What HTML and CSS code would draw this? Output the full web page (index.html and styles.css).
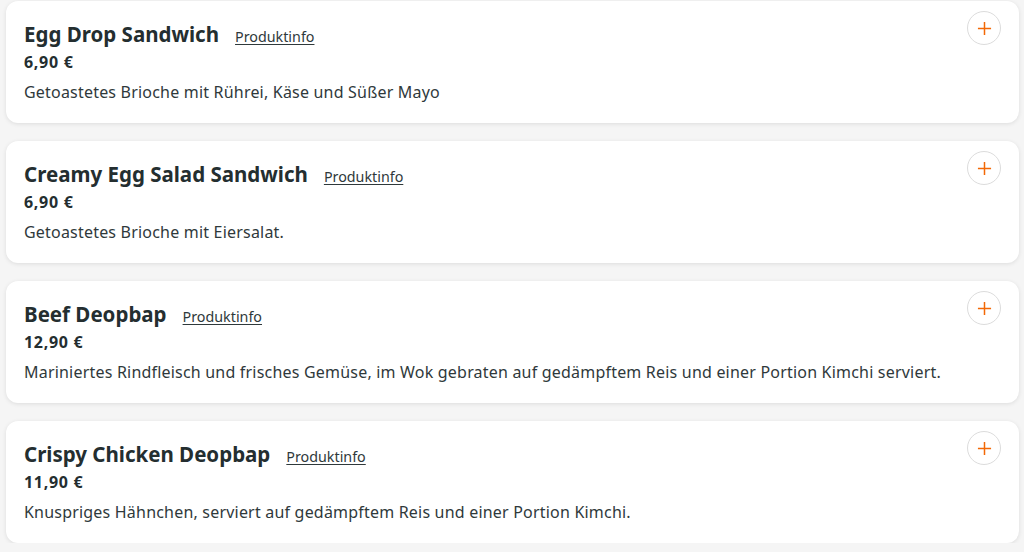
FILE: index.html
```html
<!DOCTYPE html>
<html lang="de">
<head>
<meta charset="utf-8">
<title>Menü</title>
<link rel="stylesheet" href="styles.css">
</head>
<body>
<div class="list">
  <article class="card">
    <div class="info">
      <div class="head"><h3 class="name">Egg Drop Sandwich</h3><a class="more" href="#">Produktinfo</a></div>
      <div class="price">6,90 €</div>
      <p class="desc">Getoastetes Brioche mit Rührei, Käse und Süßer Mayo</p>
    </div>
    <button class="add" aria-label="Hinzufügen"><svg viewBox="0 0 16 16" width="16" height="16"><path d="M8 1v14M1 8h14" stroke="currentColor" stroke-width="1.6" fill="none"/></svg></button>
  </article>
  <article class="card">
    <div class="info">
      <div class="head"><h3 class="name">Creamy Egg Salad Sandwich</h3><a class="more" href="#">Produktinfo</a></div>
      <div class="price">6,90 €</div>
      <p class="desc">Getoastetes Brioche mit Eiersalat.</p>
    </div>
    <button class="add" aria-label="Hinzufügen"><svg viewBox="0 0 16 16" width="16" height="16"><path d="M8 1v14M1 8h14" stroke="currentColor" stroke-width="1.6" fill="none"/></svg></button>
  </article>
  <article class="card">
    <div class="info">
      <div class="head"><h3 class="name">Beef Deopbap</h3><a class="more" href="#">Produktinfo</a></div>
      <div class="price">12,90 €</div>
      <p class="desc">Mariniertes Rindfleisch und frisches Gemüse, im Wok gebraten auf gedämpftem Reis und einer Portion Kimchi serviert.</p>
    </div>
    <button class="add" aria-label="Hinzufügen"><svg viewBox="0 0 16 16" width="16" height="16"><path d="M8 1v14M1 8h14" stroke="currentColor" stroke-width="1.6" fill="none"/></svg></button>
  </article>
  <article class="card">
    <div class="info">
      <div class="head"><h3 class="name">Crispy Chicken Deopbap</h3><a class="more" href="#">Produktinfo</a></div>
      <div class="price">11,90 €</div>
      <p class="desc">Knuspriges Hähnchen, serviert auf gedämpftem Reis und einer Portion Kimchi.</p>
    </div>
    <button class="add" aria-label="Hinzufügen"><svg viewBox="0 0 16 16" width="16" height="16"><path d="M8 1v14M1 8h14" stroke="currentColor" stroke-width="1.6" fill="none"/></svg></button>
  </article>
</div>
</body>
</html>
```
FILE: styles.css
```css
html, body {
  margin: 0;
  background: #f5f5f5;
}
body {
  padding: 1px 5px 0 6px;
  font-family: "Noto Sans", "Open Sans", sans-serif;
  color: #242e30;
}
.list {
  display: flex;
  flex-direction: column;
  gap: 18px;
}
.card {
  height: 122px;
  box-sizing: border-box;
  background: #fff;
  border-radius: 12px;
  box-shadow: 0 1px 4px rgba(0, 0, 0, 0.1);
  display: flex;
  justify-content: space-between;
  align-items: flex-start;
  padding: 10px 18px 0 18px;
}
.info {
  padding-top: 10px;
}
.head {
  display: flex;
  align-items: baseline;
  gap: 16px;
}
.name {
  margin: 0;
  font-size: 20.5px;
  font-weight: 700;
  line-height: 26px;
}
.more {
  font-size: 14.3px;
  color: #2f393b;
  text-decoration: underline;
  text-underline-offset: 2px;
}
.price {
  margin-top: 2px;
  font-size: 16px;
  font-weight: 700;
  letter-spacing: 0.7px;
  line-height: 26px;
}
.desc {
  margin: 4px 0 0;
  font-size: 16px;
  letter-spacing: 0.2px;
  line-height: 26px;
  color: #2f393b;
}
.add {
  width: 34px;
  height: 34px;
  border-radius: 50%;
  border: 1px solid #dcdcdc;
  background: #fff;
  color: #f36805;
  display: flex;
  align-items: center;
  justify-content: center;
  padding: 0;
}
.add svg {
  width: 15px;
  height: 15px;
}
```
